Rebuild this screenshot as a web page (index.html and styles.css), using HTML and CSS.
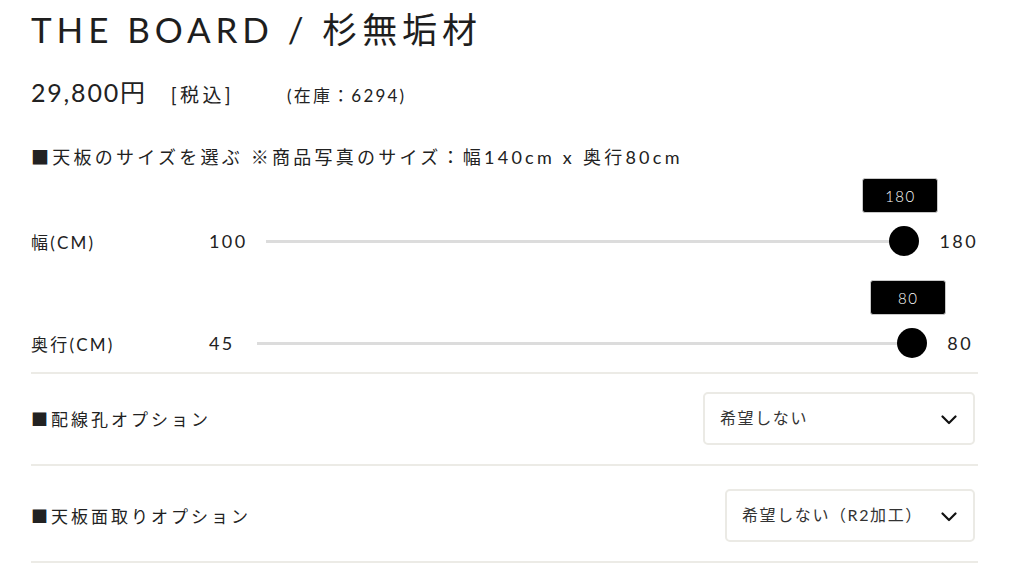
FILE: index.html
```html
<!DOCTYPE html>
<html lang="ja">
<head>
<meta charset="utf-8">
<link rel="stylesheet" href="styles.css">
</head>
<body>
<div class="product">
  <h1 class="title">THE BOARD / 杉無垢材</h1>
  <div class="price-row">
    <span class="price">29,800円</span>
    <span class="tax">[税込]</span>
    <span class="stock">(在庫：6294)</span>
  </div>
  <p class="section-head">■天板のサイズを選ぶ ※商品写真のサイズ：幅140cm x 奥行80cm</p>

  <div class="slider-row first">
    <span class="slider-label">幅(CM)</span>
    <span class="slider-min">100</span>
    <div class="slider">
      <div class="track"></div>
      <div class="thumb"></div>
      <div class="tip">180</div>
    </div>
    <span class="slider-max">180</span>
  </div>

  <div class="slider-row second">
    <span class="slider-label">奥行(CM)</span>
    <span class="slider-min">45</span>
    <div class="slider">
      <div class="track"></div>
      <div class="thumb"></div>
      <div class="tip">80</div>
    </div>
    <span class="slider-max">80</span>
  </div>

  <div class="option-row opt1">
    <span class="option-label">■配線孔オプション</span>
    <div class="select w1">
      <span>希望しない</span>
      <svg class="chev" width="16" height="10" viewBox="0 0 16 10"><path d="M1.5 1.5 L8 8 L14.5 1.5" fill="none" stroke="#111" stroke-width="2.2" stroke-linecap="round" stroke-linejoin="round"/></svg>
    </div>
  </div>

  <div class="option-row opt2">
    <span class="option-label">■天板面取りオプション</span>
    <div class="select w2">
      <span>希望しない（R2加工）</span>
      <svg class="chev" width="16" height="10" viewBox="0 0 16 10"><path d="M1.5 1.5 L8 8 L14.5 1.5" fill="none" stroke="#111" stroke-width="2.2" stroke-linecap="round" stroke-linejoin="round"/></svg>
    </div>
  </div>
</div>
</body>
</html>
```
FILE: styles.css
```css
* { box-sizing: border-box; }
html, body { margin: 0; padding: 0; background: #fff; }
body {
  font-family: "Lato", "Noto Sans CJK JP", sans-serif;
  color: #222;
}
.product {
  width: 947px;
  margin-left: 31px;
}
.title {
  margin: 0;
  padding-top: 6px;
  font-size: 35px;
  font-weight: 400;
  letter-spacing: 4.9px;
  line-height: 46px;
  color: #1e1e1e;
}
.price-row {
  display: flex;
  align-items: baseline;
  margin-top: 21px;
  height: 38px;
}
.price {
  font-size: 25px;
  font-weight: 400;
  letter-spacing: 1.8px;
}
.tax {
  font-size: 19px;
  letter-spacing: 3.4px;
  margin-left: 24px;
}
.stock {
  font-size: 17px;
  letter-spacing: 2.2px;
  margin-left: 53px;
}
.section-head {
  margin: 0;
  margin-top: 32px;
  font-size: 18px;
  letter-spacing: 3.25px;
  line-height: 28px;
}
.slider-row {
  display: flex;
  align-items: center;
  height: 30px;
  position: relative;
}
.slider-row.first { margin-top: 55px; }
.slider-row.second { margin-top: 72px; }
.slider-label {
  width: 178px;
  font-size: 17px;
  letter-spacing: 2.2px;
}
.slider-min {
  font-size: 18px;
  letter-spacing: 2.4px;
}
.first .slider-min { margin-right: 18px; }
.second .slider-min { margin-right: 22px; }
.slider {
  flex: 1;
  position: relative;
  height: 30px;
}
.track {
  position: absolute;
  left: 0;
  right: 0;
  top: 14px;
  height: 3px;
  background: #dcdcdc;
}
.thumb {
  position: absolute;
  right: 0;
  top: 0;
  width: 30px;
  height: 30px;
  border-radius: 50%;
  background: #000;
}
.tip {
  position: absolute;
  right: -19px;
  top: -48px;
  width: 76px;
  height: 35px;
  border-radius: 3px;
  background: #000;
  border: 1px solid #c8c8c8;
  color: #fff;
  font-size: 15px;
  font-weight: 300;
  letter-spacing: 1.5px;
  display: flex;
  align-items: center;
  justify-content: center;
}
.slider-max {
  margin-left: 20px;
  font-size: 18px;
  letter-spacing: 2.4px;
}
.second .slider-max { margin-right: 5px; }
.opt1 { margin-top: 14px; border-top: 2px solid #ecebe6; }
.option-row {
  display: flex;
  align-items: center;
  justify-content: space-between;
  border-bottom: 2px solid #ecebe6;
  padding: 18px 3px 19px 0;
}
.opt2 { padding: 23px 3px 19px 0; }
.option-label {
  font-size: 17px;
  letter-spacing: 3px;
}
.select {
  height: 53px;
  border: 2px solid #ebeae5;
  border-radius: 5px;
  display: flex;
  align-items: center;
  justify-content: space-between;
  padding: 0 16px 0 15px;
  font-size: 16px;
  letter-spacing: 1.6px;
  color: #333;
}
.select span { margin-top: -4px; }
.w1 { width: 272px; }
.w2 { width: 250px; }
.chev { margin-top: 2px; }
```
